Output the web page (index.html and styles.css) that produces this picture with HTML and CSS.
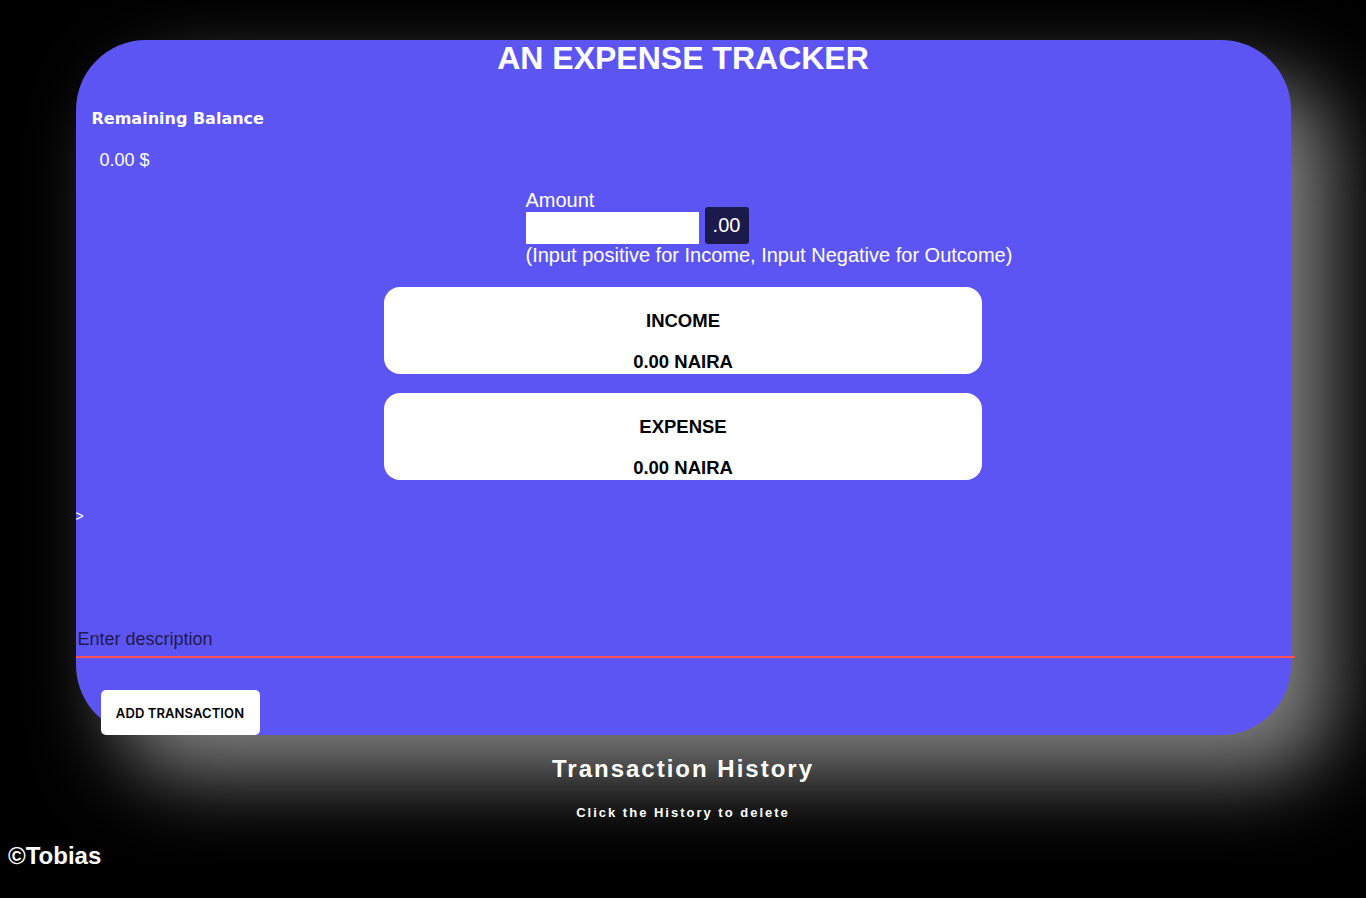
FILE: index.html
```html
<!DOCTYPE html>
<html lang="en">
<head>
<meta charset="utf-8">
<title>Expense Tracker</title>
<link rel="stylesheet" href="styles.css">
</head>
<body>
<main class="card">
  <h1 class="title">AN EXPENSE TRACKER</h1>
  <section class="balance">
    <h4 class="balance-label">Remaining Balance</h4>
    <p class="balance-value">0.00 $</p>
  </section>
  <section class="amount">
    <label class="amount-label" for="amt">Amount</label>
    <div class="amount-row">
      <input id="amt" class="amount-input" type="text">
      <span class="amount-suffix">.00</span>
    </div>
    <p class="amount-hint">(Input positive for Income, Input Negative for Outcome)</p>
  </section>
  <section class="totals">
    <div class="total-box">
      <h3 class="total-title">INCOME</h3>
      <p class="total-value">0.00 NAIRA</p>
    </div>
    <div class="total-box">
      <h3 class="total-title">EXPENSE</h3>
      <p class="total-value">0.00 NAIRA</p>
    </div>
  </section>
  <div class="stray">&gt;</div>
  <input class="desc" type="text" placeholder="Enter description">
  <button class="add-btn" type="button">ADD TRANSACTION</button>
</main>
<section class="history">
  <h2 class="history-title">Transaction History</h2>
  <p class="history-note">Click the History to delete</p>
</section>
<footer class="footer">©Tobias</footer>
</body>
</html>
```

FILE: styles.css
```css
html, body {
  background: #000;
}
body {
  margin: 0;
  padding: 8px;
  font-family: "Liberation Sans", Arial, sans-serif;
  color: #fff;
}
.card {
  width: 90%;
  margin: 32px auto 0;
  background: #5d55f3;
  border-radius: 70px;
  box-shadow: 40px 40px 80px #808080;
  height: 695px;
  display: flex;
  flex-direction: column;
  box-sizing: border-box;
}
.card > * {
  flex-shrink: 0;
}
.title {
  margin: 0;
  text-align: center;
  font-size: 32px;
  font-weight: bold;
  line-height: 37px;
}
.balance {
  padding-left: 16px;
}
.balance-label {
  margin: 31px 0 0;
  font-family: "DejaVu Sans", Verdana, sans-serif;
  font-weight: bold;
  font-size: 16px;
  line-height: 22px;
}
.balance-value {
  margin: 19px 0 0 8px;
  font-size: 18px;
  line-height: 22px;
}
.amount {
  align-self: flex-start;
  margin-left: 450px;
  margin-top: 18px;
}
.amount-label {
  display: block;
  font-size: 20px;
  line-height: 23px;
}
.amount-row {
  display: flex;
  align-items: center;
  gap: 6px;
  margin-top: -5px;
}
.amount-input {
  width: 173px;
  height: 32px;
  border: none;
  margin: 5px 0 0;
  padding: 0;
  background: #fff;
  box-sizing: border-box;
}
.amount-suffix {
  background: #1c1a4b;
  color: #fff;
  font-size: 20px;
  border-radius: 3px;
  width: 44px;
  height: 37px;
  display: flex;
  align-items: center;
  justify-content: center;
}
.amount-hint {
  margin: 0;
  font-size: 20px;
  line-height: 23px;
}
.totals {
  display: flex;
  flex-direction: column;
  align-items: center;
  gap: 19px;
  margin-top: 20px;
}
.total-box {
  width: 598px;
  height: 87px;
  background: #fff;
  color: #000;
  border-radius: 16px;
  text-align: center;
  box-sizing: border-box;
  padding-top: 23px;
}
.total-title {
  margin: 0;
  font-size: 18.5px;
  line-height: 22px;
  font-weight: bold;
}
.total-value {
  margin: 19px 0 0;
  font-size: 18.5px;
  line-height: 22px;
  font-weight: bold;
}
.stray {
  font-size: 14px;
  line-height: 16px;
  margin-top: 28px;
  color: #fff;
}
.desc {
  margin-top: 103px;
  width: calc(100% + 4px);
  background: transparent;
  border: none;
  border-bottom: 2px solid #ff5151;
  font-family: "Liberation Sans", Arial, sans-serif;
  font-size: 18px;
  padding: 2px 2px 6px;
  box-sizing: border-box;
  outline: none;
  color: #1e1b4b;
}
.desc::placeholder {
  color: #1e1b4b;
  opacity: 1;
}
.add-btn {
  align-self: flex-start;
  margin: 32px 0 0 25px;
  width: 159px;
  height: 45px;
  background: #fff;
  border: none;
  border-radius: 5px;
  font-family: "Inter", "Liberation Sans", sans-serif;
  font-weight: 600;
  font-size: 13px;
  letter-spacing: 0.1px;
  color: #000;
}
.history {
  text-align: center;
  margin-top: 20px;
}
.history-title {
  margin: 0;
  font-size: 24px;
  line-height: 28px;
  letter-spacing: 2px;
  font-weight: bold;
}
.history-note {
  margin: 22px 0 0;
  font-size: 13px;
  font-weight: bold;
  letter-spacing: 2px;
}
.footer {
  margin-top: 22px;
  font-size: 24px;
  font-weight: bold;
  line-height: 27px;
}
```
